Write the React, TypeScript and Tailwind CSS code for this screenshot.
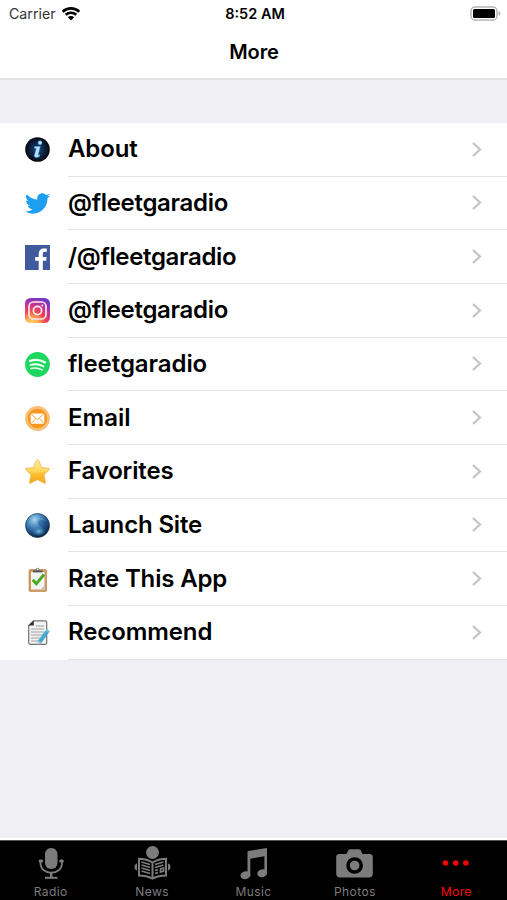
import React from "react";
import { FaTwitter } from "react-icons/fa";

function InfoIcon() {
  return (
    <svg viewBox="0 0 25 25" className="size-[25px]">
      <defs>
        <radialGradient id="info" cx=".5" cy=".5" r=".5">
          <stop offset="0" stopColor="#1d4a80" />
          <stop offset=".6" stopColor="#0d213f" />
          <stop offset="1" stopColor="#05080f" />
        </radialGradient>
      </defs>
      <circle cx="12.5" cy="12.5" r="12.3" fill="url(#info)" />
      <g fill="#b5e2fd" stroke="#4a9be2" strokeWidth=".5">
        <circle cx="15" cy="5.800" r="2" />
        <path d="M9.700 9.500h5.600l-2.300 8.800 1.900-.6-.5 1.700c-2 1.400-5.600 1.500-5-1l1.900-6.900-2.100-.4z" />
      </g>
    </svg>
  );
}

function FacebookIcon() {
  return (
    <svg viewBox="0 0 25 25" className="size-[25px]">
      <path d="M0 0h25v25H0z" fill="#3f5a9d" />
      <path d="M13.700 25v-9.200H10.200v-3.700h3.500V9c0-3.700 2.200-5.600 5.300-5.600l2.800.15v3.300h-2c-1.600 0-2 .9-2 2.200v3.050h3.800l-.5 3.700h-3.300V25z" fill="#fff" />
    </svg>
  );
}

function InstagramIcon() {
  return (
    <svg viewBox="0 0 25 25" className="size-[25px]">
      <defs>
        <radialGradient id="ig" cx=".27" cy="1.05" r="1.08">
          <stop offset="0" stopColor="#ffdc70" />
          <stop offset=".22" stopColor="#fcb552" />
          <stop offset=".5" stopColor="#f2484f" />
          <stop offset=".76" stopColor="#c1329b" />
          <stop offset="1" stopColor="#7038c8" />
        </radialGradient>
      </defs>
      <rect width="25" height="25" rx="5.500" fill="url(#ig)" />
      <g fill="none" stroke="#ffe9ee" strokeWidth="1.700">
        <rect x="4" y="4" width="17" height="17" rx="4.500" />
        <circle cx="12.500" cy="12.500" r="4.100" />
      </g>
      <circle cx="17.300" cy="7.600" r="1" fill="#ffe9ee" />
    </svg>
  );
}

function SpotifyIcon() {
  return (
    <svg viewBox="0 0 25 25" className="size-[25px]">
      <circle cx="12.500" cy="12.500" r="12.400" fill="#1ed760" />
      <g fill="none" stroke="#f1fff5" strokeLinecap="round">
        <path d="M5 8.900c5-1.500 10.700-1 15 1.500" strokeWidth="2.300" />
        <path d="M5.600 12.900c4.500-1.300 9-.7 12.900 1.500" strokeWidth="1.900" />
        <path d="M6.100 16.500c4-.9 7.600-.5 10.900 1.400" strokeWidth="1.600" />
      </g>
    </svg>
  );
}

function EmailIcon() {
  return (
    <svg viewBox="0 0 25 25" className="size-[25px]">
      <circle cx="12.500" cy="12.500" r="12.400" fill="#f9bd72" />
      <circle cx="12.500" cy="12.500" r="10.300" fill="#f6981f" stroke="#fbd09b" strokeWidth=".8" />
      <rect x="5.700" y="7.500" width="13.600" height="10.200" rx="1.200" fill="#fff" />
      <path d="m6.200 8 6.300 5.800L18.800 8M6.200 17.300l4.300-4.500M18.800 17.300l-4.300-4.500" fill="none" stroke="#f6a23a" strokeWidth="1" />
    </svg>
  );
}

function StarIcon() {
  return (
    <svg viewBox="0 0 25 25" className="size-[25px]">
      <defs>
        <linearGradient id="star" x2="0" y2="1">
          <stop offset="0" stopColor="#fff0a8" />
          <stop offset=".5" stopColor="#fdd457" />
          <stop offset=".62" stopColor="#fbbd2d" />
          <stop offset="1" stopColor="#f5a51f" />
        </linearGradient>
      </defs>
      <path d="M12.500.7q.7 0 1 .7l3.300 7.100 7.300.9q1 .2.300 1.100l-5.300 5.200 1.400 7.700q.1 1.200-1 .8l-7-3.500-7 3.500q-1.100.4-1-.8l1.400-7.700L.6 10.500q-.7-.9.3-1.100l7.300-.9 3.300-7.100q.3-.7 1-.7z" fill="url(#star)" stroke="#ecb54e" strokeWidth=".8" strokeLinejoin="round" />
    </svg>
  );
}

function GlobeIcon() {
  return (
    <svg viewBox="0 0 25 25" className="size-[25px]">
      <defs>
        <radialGradient id="globe" cx=".38" cy=".26" r=".72">
          <stop offset="0" stopColor="#a9d5f0" />
          <stop offset=".35" stopColor="#5594c6" />
          <stop offset=".7" stopColor="#22578e" />
          <stop offset="1" stopColor="#0c2547" />
        </radialGradient>
        <radialGradient id="glow">
          <stop offset="0" stopColor="#78c4ee" stopOpacity=".9" />
          <stop offset="1" stopColor="#3d8dc9" stopOpacity="0" />
        </radialGradient>
      </defs>
      <circle cx="12.500" cy="12.500" r="12" fill="url(#globe)" stroke="#163253" strokeWidth=".7" />
      <path d="M13 8c3-2 6-1 9 1 1 3 .5 6-1 7-3 0-4-1-6-3s-3-3-2-5z" fill="#123f73" opacity=".35" />
      <ellipse cx="14" cy="18.500" rx="7" ry="4.800" fill="url(#glow)" />
    </svg>
  );
}

function ClipboardIcon() {
  return (
    <svg viewBox="0 0 25 25" className="size-[25px]">
      <rect x="4" y="2.500" width="17.500" height="22" rx="1.200" fill="#d49a5c" stroke="#b87c43" strokeWidth=".6" />
      <path d="M6 5h13.500v17.500H6z" fill="#f4f5f5" />
      <path d="m15.500 22.500 4-4v4z" fill="#c1c3c3" />
      <path d="M8 5.500V3.400h2.700C11-.100 14.500-.100 14.800 3.400h2.700v2.100z" fill="#777" />
      <path d="M8 4.300h9.500" stroke="#4c4c4c" strokeWidth="1.200" />
      <circle cx="12.750" cy="2.400" r=".8" fill="#e5e5e5" />
      <path d="m7.800 12.800 3.500 4L19 7.500" fill="none" stroke="#47a91d" strokeWidth="2.900" />
    </svg>
  );
}

function DocumentIcon() {
  return (
    <svg viewBox="0 0 25 25" className="size-[25px]">
      <path d="M8.500.8h11.700q1.500 0 1.500 1.500v20.500q0 1.500-1.500 1.500h-15q-1.500 0-1.500-1.500V5.500z" fill="#f2f2f2" stroke="#737373" strokeWidth="1.200" />
      <path d="M8.800.600v5H3.400z" fill="#333" />
      <path d="M11 6h8M6 9h13M6 12h13M6 15h12M6 18h9M6 21h7" stroke="#a0a0a0" strokeWidth="1.200" />
      <path d="m21.800 9 3 2.300-8.400 11.700-3.700 1.800.4-4.300z" fill="#43a9d1" />
      <path d="m21.800 9 3 2.300-1 1.400-3-2.300z" fill="#77c9e4" />
      <path d="m13.100 20.700 3.300 2.300-3.700 1.800z" fill="#b8ced3" />
    </svg>
  );
}

const rows: { label: string; tracking: string; icon: React.ReactNode }[] = [
  { label: "About", tracking: "tracking-[-0.1px]", icon: <InfoIcon /> },
  { label: "@fleetgaradio", tracking: "tracking-[-0.3px]", icon: <FaTwitter className="size-[25px] text-[#1d9ff1]" /> },
  { label: "/@fleetgaradio", tracking: "tracking-[-0.34px]", icon: <FacebookIcon /> },
  { label: "@fleetgaradio", tracking: "tracking-[-0.3px]", icon: <InstagramIcon /> },
  { label: "fleetgaradio", tracking: "tracking-[-0.07px]", icon: <SpotifyIcon /> },
  { label: "Email", tracking: "tracking-[0]", icon: <EmailIcon /> },
  { label: "Favorites", tracking: "tracking-[-0.17px]", icon: <StarIcon /> },
  { label: "Launch Site", tracking: "tracking-[-0.15px]", icon: <GlobeIcon /> },
  { label: "Rate This App", tracking: "tracking-[-0.17px]", icon: <ClipboardIcon /> },
  { label: "Recommend", tracking: "tracking-[-0.1px]", icon: <DocumentIcon /> },
];

function MicIcon() {
  return (
    <svg viewBox="0 0 40 36" className="h-9 w-10" fill="none" stroke="#7c7c7c">
      <rect x="14" y="3" width="12.500" height="21" rx="6" fill="#7c7c7c" stroke="none" />
      <path d="M9.500 16v2c0 13 21.500 13 21.500 0v-2" strokeWidth="1.800" />
      <path d="M9.200 16h1.500M29.800 16h1.500" strokeWidth="3.200" strokeLinecap="round" />
      <path d="M20.200 27v5.500" strokeWidth="2.500" />
      <path d="M14 32.800h12.500" strokeWidth="2" />
    </svg>
  );
}

function NewsIcon() {
  return (
    <svg viewBox="0 0 40 36" className="h-9 w-10" fill="none" stroke="#7c7c7c">
      <circle cx="20.500" cy="7.500" r="6.500" fill="#7c7c7c" stroke="none" />
      <path d="M5 18.500c-3.300.5-3.300 6.500 0 7zM36 18.500c3.300.5 3.300 6.500 0 7z" fill="#7c7c7c" stroke="none" />
      <path d="M7 13.800q7.500 0 13.500 3.700 6-3.700 13.500-3.700v16.700q-7.500 0-13.500 3.200-6-3.200-13.500-3.200zM20.500 17v16" strokeWidth="2" />
      <path d="m9.500 17 8.500 2.500M9.500 20l8.500 2.500M9.500 23l8.500 2.500M9.500 26l8.500 2.500M31.500 17l-8.500 2.500M31.500 20l-8.500 2.500M31.500 23l-3 .9v3.100l3-.9zM23 25.500l3-.9M23 28.500l3-.9" strokeWidth="1.700" />
    </svg>
  );
}

function NoteIcon() {
  return (
    <svg viewBox="0 0 40 36" className="h-9 w-10" fill="#7c7c7c">
      <path d="M14.500 7q0-.8.800-1L34 3v24.500h-2.600V11.200L17.300 13.800v17h-2.800z" />
      <ellipse cx="12.400" cy="30.200" rx="5" ry="3.900" transform="rotate(-15 12.400 30.200)" />
      <ellipse cx="29.200" cy="28.200" rx="5" ry="3.900" transform="rotate(-15 29.200 28.200)" />
    </svg>
  );
}

function CameraIcon() {
  return (
    <svg viewBox="0 0 40 36" className="h-9 w-10">
      <path d="M5 9h5.500q1.200 0 1.600-1l.7-2q.6-1.800 2.500-1.800h8.400q1.900 0 2.500 1.800l.7 2q.4 1 1.600 1H34.500q3.300 0 3.300 3.300V28.500q0 4-4 4H5.200q-4 0-4-4V12.300q0-3.300 3.300-3.300z" fill="#7c7c7c" />
      <circle cx="19.600" cy="20.500" r="6.600" fill="none" stroke="#000" strokeWidth="3.500" />
    </svg>
  );
}

function DotsIcon() {
  return (
    <svg viewBox="0 0 40 36" className="h-9 w-10" fill="#f00">
      <circle cx="9.500" cy="18" r="2.800" />
      <circle cx="19.700" cy="18" r="2.800" />
      <circle cx="29.900" cy="18" r="2.800" />
    </svg>
  );
}

const tabs = [
  { label: "Radio", icon: <MicIcon />, color: "text-[#7c7c7c]" },
  { label: "News", icon: <NewsIcon />, color: "text-[#7c7c7c]" },
  { label: "Music", icon: <NoteIcon />, color: "text-[#7c7c7c]" },
  { label: "Photos", icon: <CameraIcon />, color: "text-[#7c7c7c]" },
  { label: "More", icon: <DotsIcon />, color: "text-[#f00]" },
];

export default function App() {
  return (
    <div className="flex h-[900px] w-[507px] flex-col overflow-hidden bg-[#efeff4] font-['Inter',sans-serif] text-black">
      <header className="h-[80px] shrink-0 border-b-2 border-[#e2e2e5] bg-white">
        <div className="grid h-[27px] grid-cols-3 items-center pr-[6px] pl-[9px]">
          <div className="flex items-center gap-[5px]">
            <span className="text-[14.200px] text-[#333]">Carrier</span>
            <svg viewBox="0 0 20 15" className="h-[15px] w-5">
              <path d="M1.700 5.700a12 12 0 0 1 16.600 0M4.700 8.800a7.800 7.800 0 0 1 10.600 0" fill="none" stroke="#000" strokeWidth="2.600" />
              <path d="M6.800 11.200a4.600 4.600 0 0 1 6.400 0L10 14.500z" />
            </svg>
          </div>
          <span className="text-center text-[14.500px] font-semibold whitespace-nowrap">8:52 AM</span>
          <svg viewBox="0 0 31 15" className="h-[15px] w-[31px] justify-self-end">
            <rect x="1" y="1" width="26" height="13" rx="4" fill="#fff" stroke="#b5b5b5" strokeWidth="1.500" />
            <rect x="3" y="3" width="22" height="9" rx="1.500" />
            <path d="M28.500 5q2 .8 2 2.500t-2 2.500z" fill="#b5b5b5" />
          </svg>
        </div>
        <h1 className="h-[51px] pl-px text-center text-[20px] leading-[51px] font-semibold tracking-[-0.1px]">More</h1>
      </header>

      <main className="mt-[43px] bg-white">
        {rows.map((row, i) => (
          <div key={i} className="flex h-[53.670px] items-center pl-[25px]">
            <div className="w-[25px] shrink-0">{row.icon}</div>
            <div className="ml-[18px] flex h-full flex-1 items-center justify-between border-b border-[#e4e4e7] pr-[25px]">
              <span className={"text-[24px] font-semibold whitespace-nowrap " + row.tracking}>{row.label}</span>
              <svg viewBox="0 0 11 17" className="h-[17px] w-[11px]">
                <path d="m2 2 7 6.500L2 15" fill="none" stroke="#c3c3c6" strokeWidth="2.200" />
              </svg>
            </div>
          </div>
        ))}
      </main>

      <nav className="mt-auto h-[62px] shrink-0 border-t-2 border-white bg-black">
        <div className="grid h-[60px] grid-cols-5 border-t border-[#555]">
          {tabs.map((tab) => (
            <div key={tab.label} className={"flex flex-col items-center pt-[4px] " + tab.color}>
              {tab.icon}
              <span className="mt-[2.500px] text-[12px] leading-4 tracking-[0.4px]">{tab.label}</span>
            </div>
          ))}
        </div>
      </nav>
    </div>
  );
}
